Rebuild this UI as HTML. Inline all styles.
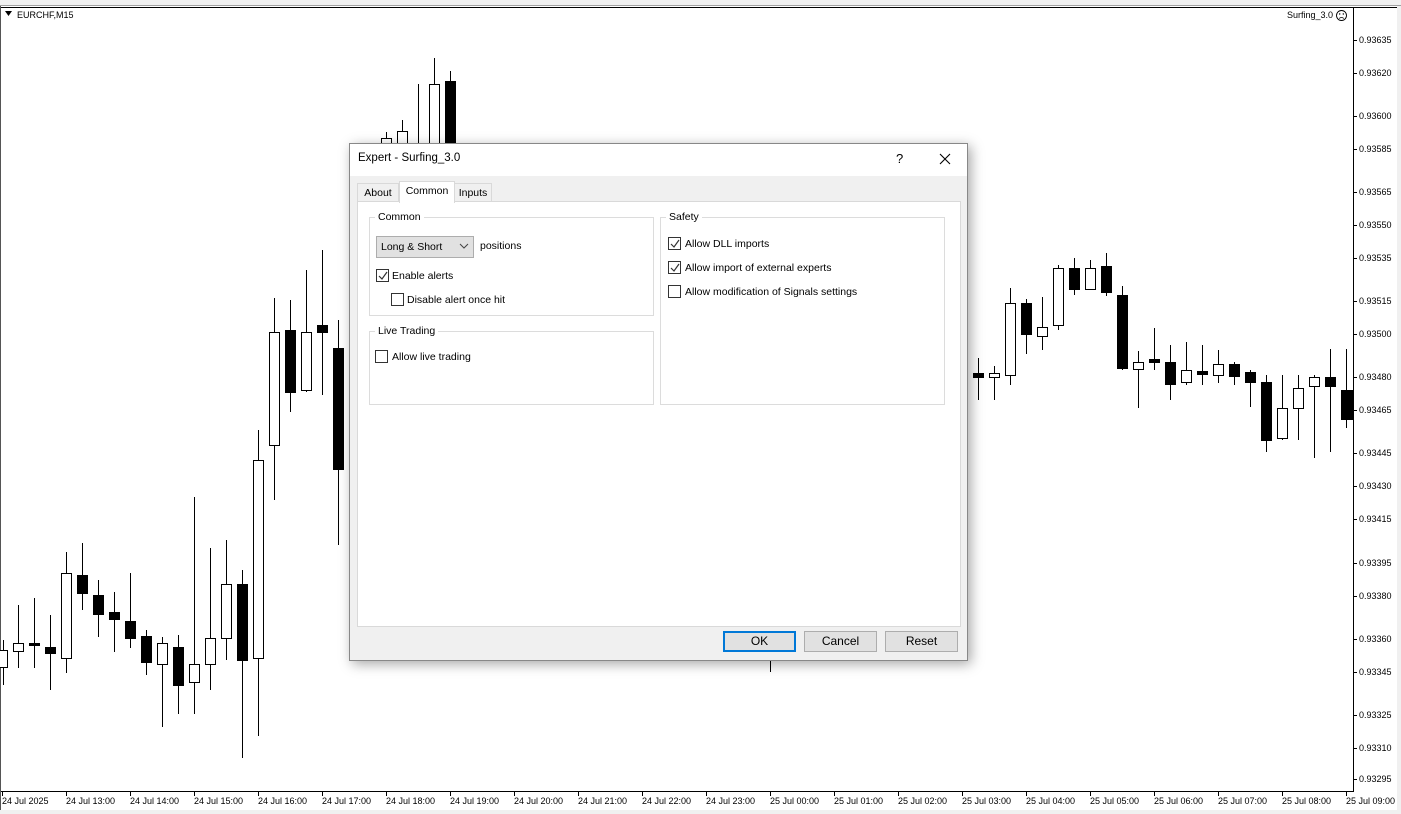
<!DOCTYPE html>
<html><head><meta charset="utf-8"><style>
*{margin:0;padding:0;box-sizing:border-box}
body{width:1401px;height:814px;overflow:hidden;background:#f0f0f0;font-family:"Liberation Sans",Tahoma,sans-serif;position:relative}
.t{position:absolute;font-size:9px;color:#000;white-space:nowrap}
#dlg{position:absolute;left:349px;top:143px;width:619px;height:518px;background:#f0f0f0;border:1px solid #888;box-shadow:3px 3px 12px rgba(0,0,0,.35);font-size:10.5px;color:#000}
#dlg .tb{position:absolute;left:0;top:0;width:617px;height:32px;background:#fff}
.abs{position:absolute;white-space:nowrap}
.cb{position:absolute;width:13px;height:13px;border:1px solid #333;background:#fff}
.grp{position:absolute;border:1px solid #dcdcdc}
.lg{position:absolute;background:#fff;padding:0 3px;top:-8px;left:5px;font-size:10.5px;line-height:14px}
.btn{position:absolute;top:487px;width:73px;height:21px;background:#e1e1e1;border:1px solid #adadad;text-align:center;line-height:19px;font-size:12px}
</style></head><body>
<div style="position:absolute;left:0;top:0;width:1401px;height:6px;background:#f0f0f0;border-bottom:1px solid #a0a0a0"></div>
<div style="position:absolute;left:0;top:6px;width:1397px;height:804px;background:#fff;border-left:1px solid #555"></div>
<svg style="position:absolute;left:0;top:0" width="1401" height="814">
<line x1="1" y1="7.5" x2="1397" y2="7.5" stroke="#000"/>
<line x1="1353.5" y1="7" x2="1353.5" y2="792" stroke="#000"/>
<line x1="1" y1="791.5" x2="1354" y2="791.5" stroke="#000"/>
<g stroke="#000" stroke-width="1" shape-rendering="crispEdges">
<line x1="3.5" y1="640" x2="3.5" y2="685"/><rect x="-1.5" y="650.5" width="9" height="17" fill="#fff"/>
<line x1="18.5" y1="605" x2="18.5" y2="668"/><rect x="13.5" y="643.5" width="10" height="8" fill="#fff"/>
<line x1="34.5" y1="598" x2="34.5" y2="668"/><rect x="29.5" y="643.5" width="10" height="2" fill="#000"/>
<line x1="50.5" y1="615" x2="50.5" y2="690"/><rect x="45.5" y="647.5" width="10" height="6" fill="#000"/>
<line x1="66.5" y1="552" x2="66.5" y2="673"/><rect x="61.5" y="573.5" width="10" height="85" fill="#fff"/>
<line x1="82.5" y1="543" x2="82.5" y2="610"/><rect x="77.5" y="575.5" width="10" height="18" fill="#000"/>
<line x1="98.5" y1="580" x2="98.5" y2="637"/><rect x="93.5" y="595.5" width="10" height="19" fill="#000"/>
<line x1="114.5" y1="592" x2="114.5" y2="652"/><rect x="109.5" y="612.5" width="10" height="7" fill="#000"/>
<line x1="130.5" y1="573" x2="130.5" y2="648"/><rect x="125.5" y="621.5" width="10" height="17" fill="#000"/>
<line x1="146.5" y1="630" x2="146.5" y2="675"/><rect x="141.5" y="636.5" width="10" height="26" fill="#000"/>
<line x1="162.5" y1="637" x2="162.5" y2="727"/><rect x="157.5" y="643.5" width="10" height="21" fill="#fff"/>
<line x1="178.5" y1="635" x2="178.5" y2="714"/><rect x="173.5" y="647.5" width="10" height="38" fill="#000"/>
<line x1="194.5" y1="497" x2="194.5" y2="714"/><rect x="189.5" y="664.5" width="10" height="18" fill="#fff"/>
<line x1="210.5" y1="548" x2="210.5" y2="690"/><rect x="205.5" y="638.5" width="10" height="26" fill="#fff"/>
<line x1="226.5" y1="540" x2="226.5" y2="660"/><rect x="221.5" y="584.5" width="10" height="54" fill="#fff"/>
<line x1="242.5" y1="570" x2="242.5" y2="758"/><rect x="237.5" y="584.5" width="10" height="76" fill="#000"/>
<line x1="258.5" y1="430" x2="258.5" y2="736"/><rect x="253.5" y="460.5" width="10" height="198" fill="#fff"/>
<line x1="274.5" y1="298" x2="274.5" y2="500"/><rect x="269.5" y="332.5" width="10" height="113" fill="#fff"/>
<line x1="290.5" y1="300" x2="290.5" y2="412"/><rect x="285.5" y="330.5" width="10" height="62" fill="#000"/>
<line x1="306.5" y1="270" x2="306.5" y2="392"/><rect x="301.5" y="332.5" width="10" height="58" fill="#fff"/>
<line x1="322.5" y1="250" x2="322.5" y2="395"/><rect x="317.5" y="325.5" width="10" height="7" fill="#000"/>
<line x1="338.5" y1="320" x2="338.5" y2="545"/><rect x="333.5" y="348.5" width="10" height="121" fill="#000"/>
<line x1="386.5" y1="132" x2="386.5" y2="150"/><rect x="381.5" y="138.5" width="10" height="10" fill="#fff"/>
<line x1="402.5" y1="120" x2="402.5" y2="150"/><rect x="397.5" y="131.5" width="10" height="18" fill="#fff"/>
<line x1="418.5" y1="84" x2="418.5" y2="150"/>
<line x1="434.5" y1="58" x2="434.5" y2="150"/><rect x="429.5" y="84.5" width="10" height="65" fill="#fff"/>
<line x1="450.5" y1="71" x2="450.5" y2="150"/><rect x="445.5" y="81.5" width="10" height="68" fill="#000"/>
<line x1="770.5" y1="655" x2="770.5" y2="672"/>
<line x1="967.5" y1="420" x2="967.5" y2="470"/>
<line x1="978.5" y1="358" x2="978.5" y2="400"/><rect x="973.5" y="373.5" width="10" height="4" fill="#000"/>
<line x1="994.5" y1="366" x2="994.5" y2="400"/><rect x="989.5" y="373.5" width="10" height="4" fill="#fff"/>
<line x1="1010.5" y1="288" x2="1010.5" y2="385"/><rect x="1005.5" y="303.5" width="10" height="72" fill="#fff"/>
<line x1="1026.5" y1="299" x2="1026.5" y2="354"/><rect x="1021.5" y="303.5" width="10" height="31" fill="#000"/>
<line x1="1042.5" y1="297" x2="1042.5" y2="350"/><rect x="1037.5" y="327.5" width="10" height="9" fill="#fff"/>
<line x1="1058.5" y1="265" x2="1058.5" y2="330"/><rect x="1053.5" y="268.5" width="10" height="57" fill="#fff"/>
<line x1="1074.5" y1="258" x2="1074.5" y2="295"/><rect x="1069.5" y="268.5" width="10" height="21" fill="#000"/>
<line x1="1090.5" y1="260" x2="1090.5" y2="290"/><rect x="1085.5" y="268.5" width="10" height="21" fill="#fff"/>
<line x1="1106.5" y1="253" x2="1106.5" y2="296"/><rect x="1101.5" y="266.5" width="10" height="26" fill="#000"/>
<line x1="1122.5" y1="286" x2="1122.5" y2="370"/><rect x="1117.5" y="295.5" width="10" height="73" fill="#000"/>
<line x1="1138.5" y1="351" x2="1138.5" y2="408"/><rect x="1133.5" y="362.5" width="10" height="7" fill="#fff"/>
<line x1="1154.5" y1="328" x2="1154.5" y2="370"/><rect x="1149.5" y="359.5" width="10" height="3" fill="#000"/>
<line x1="1170.5" y1="345" x2="1170.5" y2="400"/><rect x="1165.5" y="362.5" width="10" height="22" fill="#000"/>
<line x1="1186.5" y1="342" x2="1186.5" y2="385"/><rect x="1181.5" y="370.5" width="10" height="12" fill="#fff"/>
<line x1="1202.5" y1="345" x2="1202.5" y2="385"/><rect x="1197.5" y="371.5" width="10" height="3" fill="#000"/>
<line x1="1218.5" y1="350" x2="1218.5" y2="383"/><rect x="1213.5" y="364.5" width="10" height="11" fill="#fff"/>
<line x1="1234.5" y1="362" x2="1234.5" y2="385"/><rect x="1229.5" y="364.5" width="10" height="12" fill="#000"/>
<line x1="1250.5" y1="370" x2="1250.5" y2="407"/><rect x="1245.5" y="372.5" width="10" height="10" fill="#000"/>
<line x1="1266.5" y1="375" x2="1266.5" y2="452"/><rect x="1261.5" y="382.5" width="10" height="58" fill="#000"/>
<line x1="1282.5" y1="375" x2="1282.5" y2="440"/><rect x="1277.5" y="408.5" width="10" height="30" fill="#fff"/>
<line x1="1298.5" y1="375" x2="1298.5" y2="440"/><rect x="1293.5" y="388.5" width="10" height="20" fill="#fff"/>
<line x1="1314.5" y1="375" x2="1314.5" y2="458"/><rect x="1309.5" y="377.5" width="10" height="9" fill="#fff"/>
<line x1="1330.5" y1="349" x2="1330.5" y2="452"/><rect x="1325.5" y="377.5" width="10" height="9" fill="#000"/>
<line x1="1346.5" y1="349" x2="1346.5" y2="428"/><rect x="1341.5" y="390.5" width="11" height="29" fill="#000"/>
<path d="M1353 40.5h4M1353 73.5h4M1353 116.5h4M1353 149.5h4M1353 192.5h4M1353 225.5h4M1353 258.5h4M1353 301.5h4M1353 334.5h4M1353 377.5h4M1353 410.5h4M1353 453.5h4M1353 486.5h4M1353 519.5h4M1353 563.5h4M1353 596.5h4M1353 639.5h4M1353 672.5h4M1353 715.5h4M1353 748.5h4M1353 779.5h4"/>
<path d="M2.5 792v4M66.5 792v4M130.5 792v4M194.5 792v4M258.5 792v4M322.5 792v4M386.5 792v4M450.5 792v4M514.5 792v4M578.5 792v4M642.5 792v4M706.5 792v4M770.5 792v4M834.5 792v4M898.5 792v4M962.5 792v4M1026.5 792v4M1090.5 792v4M1154.5 792v4M1218.5 792v4M1282.5 792v4M1346.5 792v4"/>
</g>
<polygon points="5,11 12,11 8.5,16" fill="#000"/>
<circle cx="1341.5" cy="15.5" r="5" fill="none" stroke="#000" stroke-width="0.9"/>
<circle cx="1339.7" cy="14" r="0.7"/><circle cx="1343.3" cy="14" r="0.7"/>
<path d="M1339 18.5q2.5-2 5 0" fill="none" stroke="#000" stroke-width="0.8"/>
</svg>
<div class="t" style="left:17px;top:10px">EURCHF,M15</div>
<div class="t" style="left:1287px;top:10px">Surfing_3.0</div>
<div style="position:absolute;left:1359px;top:0;font-size:9px;line-height:10px">
<div class="t" style="top:35px;left:0">0.93635</div><div class="t" style="top:68px;left:0">0.93620</div><div class="t" style="top:111px;left:0">0.93600</div><div class="t" style="top:144px;left:0">0.93585</div><div class="t" style="top:187px;left:0">0.93565</div><div class="t" style="top:220px;left:0">0.93550</div><div class="t" style="top:253px;left:0">0.93535</div><div class="t" style="top:296px;left:0">0.93515</div><div class="t" style="top:329px;left:0">0.93500</div><div class="t" style="top:372px;left:0">0.93480</div><div class="t" style="top:405px;left:0">0.93465</div><div class="t" style="top:448px;left:0">0.93445</div><div class="t" style="top:481px;left:0">0.93430</div><div class="t" style="top:514px;left:0">0.93415</div><div class="t" style="top:558px;left:0">0.93395</div><div class="t" style="top:591px;left:0">0.93380</div><div class="t" style="top:634px;left:0">0.93360</div><div class="t" style="top:667px;left:0">0.93345</div><div class="t" style="top:710px;left:0">0.93325</div><div class="t" style="top:743px;left:0">0.93310</div><div class="t" style="top:774px;left:0">0.93295</div>
</div>
<div class="t" style="left:2px;top:796px">24 Jul 2025</div><div class="t" style="left:66px;top:796px">24 Jul 13:00</div><div class="t" style="left:130px;top:796px">24 Jul 14:00</div><div class="t" style="left:194px;top:796px">24 Jul 15:00</div><div class="t" style="left:258px;top:796px">24 Jul 16:00</div><div class="t" style="left:322px;top:796px">24 Jul 17:00</div><div class="t" style="left:386px;top:796px">24 Jul 18:00</div><div class="t" style="left:450px;top:796px">24 Jul 19:00</div><div class="t" style="left:514px;top:796px">24 Jul 20:00</div><div class="t" style="left:578px;top:796px">24 Jul 21:00</div><div class="t" style="left:642px;top:796px">24 Jul 22:00</div><div class="t" style="left:706px;top:796px">24 Jul 23:00</div><div class="t" style="left:770px;top:796px">25 Jul 00:00</div><div class="t" style="left:834px;top:796px">25 Jul 01:00</div><div class="t" style="left:898px;top:796px">25 Jul 02:00</div><div class="t" style="left:962px;top:796px">25 Jul 03:00</div><div class="t" style="left:1026px;top:796px">25 Jul 04:00</div><div class="t" style="left:1090px;top:796px">25 Jul 05:00</div><div class="t" style="left:1154px;top:796px">25 Jul 06:00</div><div class="t" style="left:1218px;top:796px">25 Jul 07:00</div><div class="t" style="left:1282px;top:796px">25 Jul 08:00</div><div class="t" style="left:1346px;top:796px">25 Jul 09:00</div>

<div id="dlg">
 <div class="tb"></div>
 <div class="abs" style="left:8px;top:8px;font-size:11.5px">Expert - Surfing_3.0</div>
 <div class="abs" style="left:546px;top:7px;font-size:13px">?</div>
 <svg class="abs" style="left:589px;top:9px" width="12" height="12"><path d="M1 1L11 11M11 1L1 11" stroke="#000" stroke-width="1.1"/></svg>
 <div class="abs" style="left:7px;top:39px;width:42px;height:19px;border:1px solid #d9d9d9;border-bottom:none;background:#f0f0f0;text-align:center;line-height:19px">About</div>
 <div class="abs" style="left:104px;top:39px;width:38px;height:19px;border:1px solid #d9d9d9;border-bottom:none;background:#f0f0f0;text-align:center;line-height:19px">Inputs</div>
 <div class="abs" style="left:7px;top:57px;width:604px;height:426px;background:#fff;border:1px solid #d9d9d9"></div>
 <div class="abs" style="left:49px;top:37px;width:56px;height:22px;border:1px solid #d9d9d9;border-bottom:none;background:#fff;text-align:center;line-height:19px">Common</div>
 <div class="grp" style="left:19px;top:73px;width:285px;height:99px"><span class="lg">Common</span></div>
 <div class="abs" style="left:26px;top:92px;width:98px;height:22px;background:#e1e1e1;border:1px solid #adadad;padding-left:4px;line-height:20px">Long &amp; Short</div>
 <svg class="abs" style="left:109px;top:99px" width="10" height="6"><path d="M1 1L5 5L9 1" fill="none" stroke="#444"/></svg>
 <div class="abs" style="left:130px;top:96px">positions</div>
 <div class="cb" style="left:26px;top:125px"></div>
 <svg class="abs" style="left:28px;top:127px" width="10" height="10"><path d="M1 5L4 8L9 1" fill="none" stroke="#333" stroke-width="1.2"/></svg>
 <div class="abs" style="left:42px;top:126px">Enable alerts</div>
 <div class="cb" style="left:41px;top:149px"></div>
 <div class="abs" style="left:57px;top:150px">Disable alert once hit</div>
 <div class="grp" style="left:19px;top:187px;width:285px;height:74px"><span class="lg">Live Trading</span></div>
 <div class="cb" style="left:25px;top:206px"></div>
 <div class="abs" style="left:42px;top:207px">Allow live trading</div>
 <div class="grp" style="left:310px;top:73px;width:285px;height:188px"><span class="lg">Safety</span></div>
 <div class="cb" style="left:318px;top:93px"></div>
 <svg class="abs" style="left:320px;top:95px" width="10" height="10"><path d="M1 5L4 8L9 1" fill="none" stroke="#333" stroke-width="1.2"/></svg>
 <div class="abs" style="left:335px;top:94px">Allow DLL imports</div>
 <div class="cb" style="left:318px;top:117px"></div>
 <svg class="abs" style="left:320px;top:119px" width="10" height="10"><path d="M1 5L4 8L9 1" fill="none" stroke="#333" stroke-width="1.2"/></svg>
 <div class="abs" style="left:335px;top:118px">Allow import of external experts</div>
 <div class="cb" style="left:318px;top:141px"></div>
 <div class="abs" style="left:335px;top:142px">Allow modification of Signals settings</div>
 <div class="btn" style="left:373px;border:2px solid #0078d7;line-height:17px">OK</div>
 <div class="btn" style="left:454px">Cancel</div>
 <div class="btn" style="left:535px">Reset</div>
</div>
</body></html>
